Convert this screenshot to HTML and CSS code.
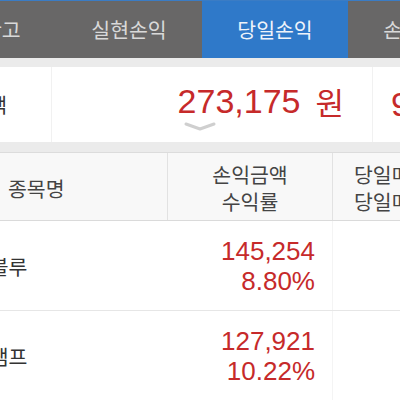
FILE: index.html
```html
<!DOCTYPE html>
<html lang="ko">
<head>
<meta charset="utf-8">
<link rel="stylesheet" href="styles.css">
</head>
<body>
<div class="screen">
  <nav class="tabs">
    <div class="tab">평가잔고</div>
    <div class="tab">실현손익</div>
    <div class="tab active">당일손익</div>
    <div class="tab">손익현황</div>
  </nav>
  <section class="summary-wrap">
    <div class="summary">
      <div class="s-label">손익금액</div>
      <div class="s-value"><span class="num">273,175</span><span class="won">원</span></div>
      <div class="s-next">9,412 원</div>
      <svg class="chev" width="32" height="9" viewBox="0 0 32 9"><path d="M2 2 L16 7 L30 2" fill="none" stroke="#cfcfcf" stroke-width="3" stroke-linecap="round" stroke-linejoin="round"/></svg>
    </div>
  </section>
  <section class="table">
    <div class="row head">
      <div class="c1">종목명</div>
      <div class="c2"><span class="line">손익금액</span><span class="line">수익률</span></div>
      <div class="c3"><span class="line">당일매수</span><span class="line">당일매도</span></div>
    </div>
    <div class="row">
      <div class="c1 name">삼성블루</div>
      <div class="c2 val"><span class="line">145,254</span><span class="line">8.80%</span></div>
      <div class="c3"></div>
    </div>
    <div class="row">
      <div class="c1 name">헬스챔프</div>
      <div class="c2 val"><span class="line">127,921</span><span class="line">10.22%</span></div>
      <div class="c3"></div>
    </div>
  </section>
</div>
</body>
</html>
```
FILE: styles.css
```css
* { box-sizing: border-box; }
html, body { margin: 0; padding: 0; background: #fff; }
body {
  width: 400px; height: 400px; overflow: hidden;
  font-family: "Liberation Sans", "Noto Sans CJK KR", sans-serif;
  color: #3a3a3a;
}
.screen { width: 400px; overflow: hidden; }

.tabs {
  display: flex;
  height: 58px;
  margin-left: -90px;
  width: 700px;
  background: #686767;
  border-top: 1px solid #3b7cc4;
}
.tab {
  flex: 0 0 146px;
  display: flex; align-items: center; justify-content: center;
  font-family: "Noto Sans CJK KR", sans-serif;
  font-size: 20.5px;
  color: #d9d9d9;
  padding-bottom: 1px;
  white-space: nowrap;
}
.tab.active { background: #2f79c9; color: #eef3fa; }

.summary-wrap {
  background: #ebebeb;
  padding: 9px 0 10px;
}
.summary {
  position: relative;
  display: grid;
  grid-template-columns: 150px 321px 200px;
  margin-left: -98px;
  width: 700px;
  height: 75px;
  background: #fff;
}
.s-label {
  display: flex; align-items: center; justify-content: flex-end;
  padding-right: 44px;
  font-family: "Noto Sans CJK KR", sans-serif;
  font-size: 20.5px; color: #333;
  border-right: 1px solid #f1f1f1;
  padding-bottom: 2px;
  white-space: nowrap;
}
.s-value {
  display: flex; align-items: center; justify-content: flex-end;
  padding-right: 28px;
  color: #c62a2a;
  border-right: 1px solid #f1f1f1;
  padding-bottom: 6px;
  white-space: nowrap;
}
.num { font-size: 34px; letter-spacing: 0; }
.won {
  font-family: "Noto Sans CJK KR", sans-serif;
  font-size: 31px; margin-left: 15px;
  line-height: 1;
}
.s-next {
  display: flex; align-items: center;
  padding-left: 18px; padding-bottom: 6px;
  color: #c62a2a; font-size: 34px;
  white-space: nowrap;
}
.chev { position: absolute; left: 282px; top: 55px; }

.table { border-top: 1px solid #dcdcdc; }
.row {
  display: grid;
  grid-template-columns: 267px 165px 200px;
  margin-left: -100px;
  width: 700px;
  height: 90px;
  border-bottom: 1px solid #e6e6e6;
}
.row.head {
  height: 68px;
  background: #f8f8f8;
  border-bottom: 1px solid #dadada;
}
.row > div {
  display: flex; flex-direction: column; justify-content: center;
  white-space: nowrap;
}
.line { display: block; }
.head > div {
  font-family: "Noto Sans CJK KR", sans-serif;
  font-size: 20.5px; color: #444;
  gap: 0;
}
.head .line { height: 27px; line-height: 27px; overflow: visible; }
.head .c1 { padding-left: 108px; padding-top: 2px; }
.head .c2 { align-items: center; border-left: 1px solid #e2e2e2; padding-top: 2px; }
.head .c3 { border-left: 1px solid #e2e2e2; padding-left: 21px; padding-top: 2px; }
.name {
  font-family: "Noto Sans CJK KR", sans-serif;
  font-size: 20.5px; color: #333;
  padding-left: 52px;
}
.val {
  align-items: flex-end;
  padding: 0 17px 0 0;
  font-size: 26px; line-height: 30px;
  color: #c62a2a;
}
.row:not(.head) .c3 { border-left: 1px solid #f4f4f4; }
```
